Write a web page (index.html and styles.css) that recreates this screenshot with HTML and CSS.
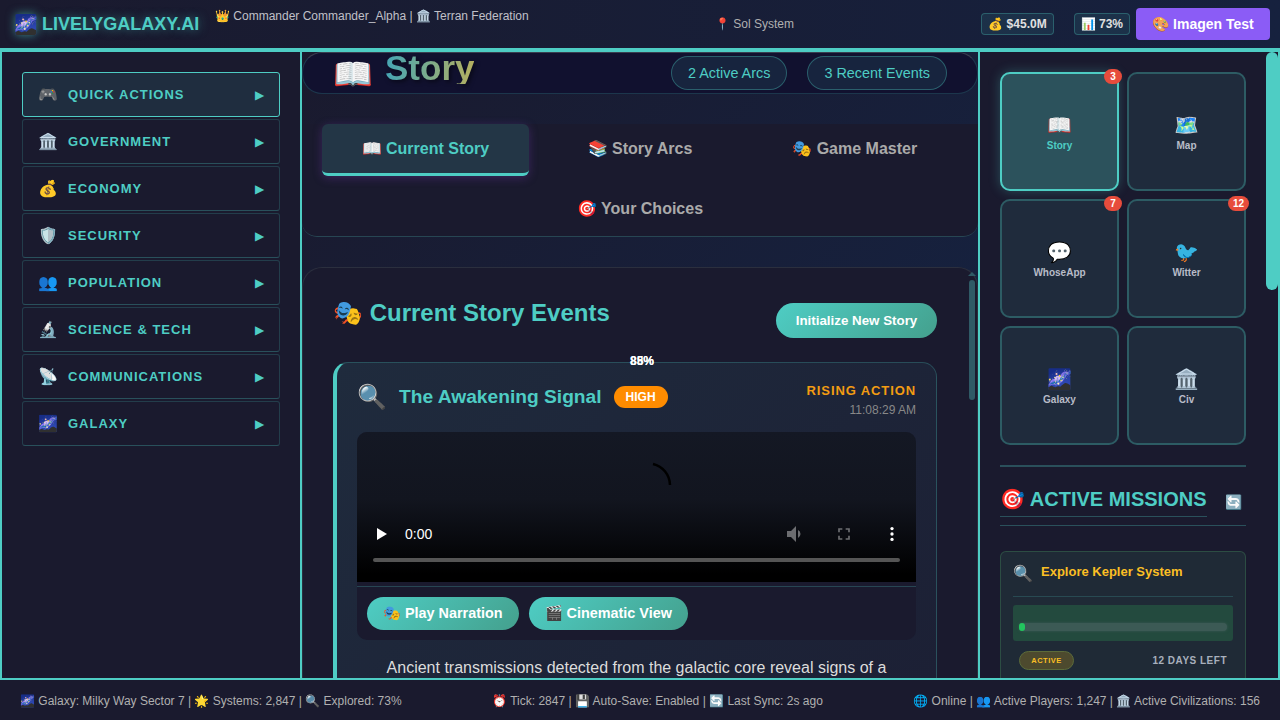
FILE: index.html
```html
<!DOCTYPE html>
<html lang="en">
  <head>
    <meta charset="UTF-8" />
    <meta name="viewport" content="width=device-width, initial-scale=1.0" />
    <title>LivelyGalaxy.ai</title>
    <link rel="stylesheet" href="styles.css">
  </head>
  <body>
    <div class="app">
      <header class="topbar">
        <div class="logo"><span class="logo-icon">🌌</span><span class="logo-text">LIVELYGALAXY.AI</span></div>
        <div class="player">👑 Commander Commander_Alpha | 🏛️ Terran Federation</div>
        <div class="location">📍 Sol System</div>
        <div class="stat stat-money">💰 $45.0M</div>
        <div class="stat stat-approval">📊 73%</div>
        <button class="imagen-btn">🎨 Imagen Test</button>
      </header>

      <main class="layout">
        <nav class="leftnav">
          <div class="navitem active"><span class="navicon">🎮</span><span class="navlabel">QUICK ACTIONS</span><span class="navarrow">▶</span></div>
          <div class="navitem"><span class="navicon">🏛️</span><span class="navlabel">GOVERNMENT</span><span class="navarrow">▶</span></div>
          <div class="navitem"><span class="navicon">💰</span><span class="navlabel">ECONOMY</span><span class="navarrow">▶</span></div>
          <div class="navitem"><span class="navicon">🛡️</span><span class="navlabel">SECURITY</span><span class="navarrow">▶</span></div>
          <div class="navitem"><span class="navicon">👥</span><span class="navlabel">POPULATION</span><span class="navarrow">▶</span></div>
          <div class="navitem"><span class="navicon">🔬</span><span class="navlabel">SCIENCE &amp; TECH</span><span class="navarrow">▶</span></div>
          <div class="navitem"><span class="navicon">📡</span><span class="navlabel">COMMUNICATIONS</span><span class="navarrow">▶</span></div>
          <div class="navitem"><span class="navicon">🌌</span><span class="navlabel">GALAXY</span><span class="navarrow">▶</span></div>
        </nav>

        <section class="center">
          <div class="story-head">
            <span class="story-book">📖</span>
            <h1 class="story-title">Story</h1>
            <div class="pills">
              <span class="pill">2 Active Arcs</span>
              <span class="pill">3 Recent Events</span>
            </div>
          </div>

          <div class="tabs">
            <div class="tab active">📖 Current Story</div>
            <div class="tab">📚 Story Arcs</div>
            <div class="tab">🎭 Game Master</div>
            <div class="tab tab-wide">🎯 Your Choices</div>
          </div>

          <div class="events">
            <div class="events-scroll"><span class="scroll-arrow"></span><span class="scroll-thumb"></span></div>
            <div class="events-head">
              <h2 class="events-title">🎭 Current Story Events</h2>
              <button class="round-btn init-btn">Initialize New Story</button>
            </div>

            <article class="card">
              <span class="stray-pct">88%</span>
              <span class="stray-pct">85%</span>
              <div class="card-head">
                <span class="card-icon">🔍</span>
                <h3 class="card-title">The Awakening Signal</h3>
                <span class="badge-high">HIGH</span>
                <div class="card-meta">
                  <div class="phase">RISING ACTION</div>
                  <div class="time">11:08:29 AM</div>
                </div>
              </div>

              <div class="media">
                <div class="video">
                  <svg class="spinner" width="24" height="26" viewBox="0 0 24 26">
                    <path d="M3 2 A 22 22 0 0 1 20 23" fill="none" stroke="#000" stroke-width="2.5" />
                  </svg>
                  <div class="controls">
                    <svg width="16" height="16" viewBox="0 0 16 16"><path d="M4 2 L14 8 L4 14 Z" fill="#fff" /></svg>
                    <span class="vtime">0:00</span>
                    <span class="vspace"></span>
                    <svg class="vdim vvol" width="24" height="24" viewBox="0 0 24 24"><path d="M3 9v6h4l5 5V4L7 9H3zm13.500 3A4.500 4.500 0 0 0 14 8v8a4.500 4.500 0 0 0 2.500-4z" fill="#fff" /></svg>
                    <svg class="vdim" width="20" height="20" viewBox="0 0 24 24"><path d="M5 10h2V7h3V5H5zm0 4v5h5v-2H7v-3zm12 3h-3v2h5v-5h-2zM14 5v2h3v3h2V5z" fill="#fff" /></svg>
                    <svg width="20" height="20" viewBox="0 0 24 24"><circle cx="12" cy="5.500" r="2" fill="#fff" /><circle cx="12" cy="12" r="2" fill="#fff" /><circle cx="12" cy="18.500" r="2" fill="#fff" /></svg>
                  </div>
                  <div class="vtrack"></div>
                </div>
                <div class="media-actions">
                  <button class="round-btn act-btn">🎭 Play Narration</button>
                  <button class="round-btn act-btn">🎬 Cinematic View</button>
                </div>
              </div>

              <p class="card-text">Ancient transmissions detected from the galactic core reveal signs of a</p>
            </article>
          </div>
        </section>

        <aside class="right">
          <div class="right-thumb"></div>
          <div class="tiles">
            <div class="tile active"><span class="tile-badge">3</span><span class="tile-icon">📖</span><span class="tile-label">Story</span></div>
            <div class="tile"><span class="tile-icon">🗺️</span><span class="tile-label">Map</span></div>
            <div class="tile"><span class="tile-badge">7</span><span class="tile-icon">💬</span><span class="tile-label">WhoseApp</span></div>
            <div class="tile"><span class="tile-badge">12</span><span class="tile-icon">🐦</span><span class="tile-label">Witter</span></div>
            <div class="tile"><span class="tile-icon">🌌</span><span class="tile-label">Galaxy</span></div>
            <div class="tile"><span class="tile-icon">🏛️</span><span class="tile-label">Civ</span></div>
          </div>

          <div class="missions-head">
            <h2 class="missions-title">🎯 ACTIVE MISSIONS</h2>
            <span class="refresh">🔄</span>
          </div>

          <div class="mission">
            <div class="mission-top">
              <span class="mission-icon">🔍</span>
              <span class="mission-name">Explore Kepler System</span>
            </div>
            <div class="mission-progress">
              <div class="mission-bar"><div class="mission-fill" style="width: 3%"></div></div>
            </div>
            <div class="mission-foot">
              <span class="mission-status">ACTIVE</span>
              <span class="mission-days">12 DAYS LEFT</span>
            </div>
          </div>
        </aside>
      </main>

      <footer class="statusbar">
        <span>🌌 Galaxy: Milky Way Sector 7 | 🌟 Systems: 2,847 | 🔍 Explored: 73%</span>
        <span>⏰ Tick: 2847 | 💾 Auto-Save: Enabled | 🔄 Last Sync: 2s ago</span>
        <span>🌐 Online | 👥 Active Players: 1,247 | 🏛️ Active Civilizations: 156</span>
      </footer>
    </div>
  </body>
</html>
```

FILE: styles.css
```css
* {
  box-sizing: border-box;
}
html, body {
  margin: 0;
  height: 100%;
  overflow: hidden;
}
body {
  font-family: "Liberation Sans", Arial, sans-serif;
  background: #1a1a2e;
  color: #e0e0e0;
}
h1, h2, h3, p {
  margin: 0;
}
button {
  font-family: inherit;
  border: none;
}
.app {
  display: grid;
  grid-template-rows: 52px 626px 42px;
  height: 720px;
}

/* top bar */
.topbar {
  display: flex;
  align-items: center;
  padding: 0 10px 0 14px;
  background: linear-gradient(90deg, #1a1a2e, #16213e);
  border-bottom: 4px solid #4ecdc4;
}
.logo {
  display: flex;
  align-items: center;
  width: 201px;
}
.logo-icon {
  flex: none;
  width: 28px;
  font-size: 19px;
  filter: drop-shadow(0 0 5px rgba(78, 205, 196, 0.6));
}
.logo-text {
  font-size: 18px;
  font-weight: bold;
  color: #4ecdc4;
  text-shadow: 0 0 10px rgba(78, 205, 196, 0.5);
  white-space: nowrap;
}
.player {
  width: 500px;
  align-self: flex-start;
  padding-top: 9px;
  font-size: 12px;
  color: #c0c0c8;
  white-space: nowrap;
}
.location {
  font-size: 12px;
  color: #b0b0b0;
}
.stat {
  padding: 3px 6px;
  font-size: 12px;
  font-weight: bold;
  color: #e0e0e0;
  background: rgba(78, 205, 196, 0.1);
  border: 1px solid rgba(78, 205, 196, 0.3);
  border-radius: 4px;
}
.stat-money {
  margin-left: auto;
}
.stat-approval {
  margin-left: 20px;
}
.imagen-btn {
  margin-left: 6px;
  width: 134px;
  height: 32px;
  font-size: 14px;
  font-weight: bold;
  color: #fff;
  background: #8b5cf6;
  border-radius: 4px;
}

/* three columns */
.layout {
  display: grid;
  grid-template-columns: 300px 680px 300px;
  min-height: 0;
}

/* left nav */
.leftnav {
  display: flex;
  flex-direction: column;
  gap: 2px;
  padding: 20px 20px 0;
  background: #1a1a2e;
  border-left: 2px solid #4ecdc4;
}
.navitem {
  display: flex;
  align-items: center;
  height: 45px;
  padding: 0 15px;
  border: 1px solid rgba(78, 205, 196, 0.2);
  border-bottom-color: rgba(78, 205, 196, 0.3);
  border-radius: 3px;
  color: #4ecdc4;
}
.navitem.active {
  background: #1f2d3f;
  border-color: #4ecdc4;
}
.navicon {
  width: 30px;
  font-size: 16px;
}
.navlabel {
  flex: 1;
  font-size: 13px;
  font-weight: bold;
  letter-spacing: 1px;
}
.navarrow {
  font-size: 12px;
}

/* center column */
.center {
  display: flex;
  flex-direction: column;
  min-width: 0;
  background: linear-gradient(135deg, #1a1a2e, #16213e 70%, #17294e);
  border-left: 2px solid #4ecdc4;
  border-right: 2px solid #4ecdc4;
}
.story-head {
  display: flex;
  align-items: center;
  flex: none;
  height: 42px;
  padding: 0 30px;
  background: #11112f;
  border: 1px solid rgba(78, 205, 196, 0.2);
  border-top-color: #3a3f50;
  border-radius: 20px;
}
.story-book {
  font-size: 32px;
  margin-right: 12px;
  margin-top: 2px;
}
.story-title {
  margin-bottom: 10px;
  font-size: 35px;
  line-height: 32px;
  font-weight: bold;
  color: transparent;
  background: linear-gradient(90deg, #45a5b5, #b5b060);
  -webkit-background-clip: text;
  background-clip: text;
  filter: drop-shadow(2px 2px 2px rgba(0, 0, 0, 0.5));
}
.pills {
  display: flex;
  gap: 20px;
  margin-left: auto;
}
.pill {
  padding: 8px 16px;
  font-size: 14.400px;
  line-height: 16px;
  color: #4ecdc4;
  background: rgba(78, 205, 196, 0.1);
  border: 1px solid rgba(78, 205, 196, 0.35);
  border-radius: 17px;
}
.tabs {
  display: grid;
  grid-template-columns: repeat(3, 1fr);
  grid-auto-rows: 52px;
  flex: none;
  gap: 8px;
  margin-top: 30px;
  padding: 0 20px;
  height: 113px;
  background: #1a1a2e;
  border-bottom: 1px solid rgba(78, 205, 196, 0.25);
  border-radius: 0 0 15px 15px;
}
.tab {
  display: flex;
  align-items: center;
  justify-content: center;
  font-size: 16px;
  font-weight: bold;
  color: #aaa;
  border-bottom: 3px solid transparent;
  border-radius: 6px;
}
.tab.active {
  color: #4ecdc4;
  background: #233646;
  border-bottom-color: #4ecdc4;
  box-shadow: 0 2px 10px rgba(120, 60, 180, 0.35);
}
.tab-wide {
  grid-column: 1 / 4;
}

/* events panel, runs down to the status bar */
.events {
  position: relative;
  flex: none;
  height: 411px;
  margin-top: 30px;
  padding: 30px 40px 0 30px;
  background: #1a1a2e;
  border: 1px solid #2b2f3e;
  border-bottom: none;
  border-radius: 20px 20px 0 0;
}
.events-scroll {
  position: absolute;
  top: 0;
  right: 1px;
  bottom: 0;
  width: 8px;
}
.scroll-arrow {
  position: absolute;
  top: 4px;
  left: 0;
  border-left: 4px solid transparent;
  border-right: 4px solid transparent;
  border-bottom: 4px solid #2f5a66;
}
.scroll-thumb {
  position: absolute;
  top: 12px;
  left: 1px;
  width: 6px;
  height: 120px;
  background: #2f5a66;
  border-radius: 3px;
}
.events-head {
  display: flex;
  justify-content: space-between;
  align-items: flex-start;
  height: 64px;
}
.events-title {
  font-size: 24px;
  line-height: 29px;
  font-weight: bold;
  color: #4ecdc4;
}
.round-btn {
  color: #fff;
  font-weight: bold;
  background: linear-gradient(135deg, #4ecdc4, #44a08d);
  border-radius: 18px;
}
.init-btn {
  width: 161px;
  height: 35px;
  margin-top: 5px;
  font-size: 13.330px;
}
.card {
  position: relative;
  height: 316px;
  padding: 20px 20px 0 20px;
  background: linear-gradient(135deg, #1f2b3d, #1c2035);
  border: 1px solid rgba(78, 205, 196, 0.25);
  border-left: 4px solid #4ecdc4;
  border-bottom: none;
  border-radius: 15px 15px 0 0;
}
.stray-pct {
  position: absolute;
  top: -9px;
  left: 293px;
  font-size: 12px;
  font-weight: bold;
  line-height: 14px;
  color: #fff;
}
.card-head {
  display: flex;
  align-items: flex-start;
  height: 49px;
}
.card-icon {
  margin-right: 12px;
  font-size: 24px;
  line-height: 28px;
}
.card-title {
  margin-top: 2px;
  font-size: 19.200px;
  line-height: 23px;
  font-weight: bold;
  color: #4ecdc4;
}
.badge-high {
  margin: 3px 0 0 12px;
  padding: 0 12px;
  height: 22px;
  font-size: 12px;
  font-weight: bold;
  line-height: 22px;
  color: #fff;
  background: #ff8c00;
  border-radius: 11px;
}
.card-meta {
  margin-left: auto;
  text-align: right;
}
.phase {
  font-size: 13px;
  line-height: 16px;
  font-weight: bold;
  letter-spacing: 0.900px;
  color: #f39c12;
}
.time {
  margin-top: 4px;
  font-size: 12px;
  line-height: 14px;
  color: #888;
}
.media {
  border-radius: 10px;
  background: #1a1a2e;
  overflow: hidden;
}
.video {
  position: relative;
  height: 150px;
  background: linear-gradient(180deg, #141824 0%, #12151f 45%, #000 95%);
}
.spinner {
  position: absolute;
  top: 30px;
  left: 293px;
}
.controls {
  position: absolute;
  left: 16px;
  right: 14px;
  top: 92px;
  display: flex;
  align-items: center;
  gap: 9px;
  height: 20px;
}
.vtime {
  margin-left: 7px;
  font-size: 14px;
  color: #fff;
}
.vspace {
  flex: 1;
}
.vdim {
  margin-right: 19px;
  opacity: 0.4;
}
.vvol {
  margin-right: 17px;
}
.vtrack {
  position: absolute;
  left: 16px;
  right: 16px;
  top: 126px;
  height: 4px;
  background: #555;
  border-radius: 2px;
}
.media-actions {
  display: flex;
  gap: 10px;
  height: 54px;
  margin-top: 4px;
  padding: 10px;
  border-top: 1px solid rgba(78, 205, 196, 0.25);
}
.act-btn {
  height: 33px;
  padding: 0 16px;
  font-size: 14.400px;
  white-space: nowrap;
}
.card-text {
  margin-top: 17px;
  padding: 0 20px;
  font-size: 16px;
  line-height: 21px;
  text-align: center;
  color: #dcdcdc;
}

/* right column */
.right {
  position: relative;
  padding: 20px 0 0 20px;
  background: #1a1a2e;
  border-right: 2px solid #4ecdc4;
}
.right-thumb {
  position: absolute;
  top: 0;
  right: 0;
  width: 12px;
  height: 238px;
  background: #4ecdc4;
  border-radius: 6px;
}
.tiles {
  display: grid;
  grid-template-columns: 119px 119px;
  grid-auto-rows: 119px;
  gap: 8px;
  padding-bottom: 20px;
  width: 246px;
  border-bottom: 2px solid rgba(78, 205, 196, 0.3);
}
.tile {
  position: relative;
  display: flex;
  flex-direction: column;
  align-items: center;
  justify-content: center;
  gap: 3px;
  padding-top: 1px;
  background: #1f2b3c;
  border: 2px solid rgba(78, 205, 196, 0.3);
  border-radius: 10px;
}
.tile.active {
  background: #2c525c;
  border-color: #4ecdc4;
  box-shadow: 0 0 12px rgba(78, 205, 196, 0.3);
}
.tile-icon {
  font-size: 20px;
  line-height: 24px;
}
.tile-label {
  font-size: 10px;
  font-weight: bold;
  line-height: 12px;
  color: #b8bcc8;
}
.tile.active .tile-label {
  color: #4ecdc4;
}
.tile-badge {
  position: absolute;
  top: -5px;
  right: -5px;
  min-width: 18px;
  padding: 0 5px;
  height: 15px;
  font-size: 10px;
  font-weight: bold;
  line-height: 15px;
  text-align: center;
  color: #fff;
  background: #e74c3c;
  border-radius: 8px;
}
.missions-head {
  display: flex;
  align-items: flex-start;
  width: 246px;
  height: 59px;
  padding-top: 18px;
  border-bottom: 1px solid rgba(78, 205, 196, 0.3);
}
.missions-title {
  font-size: 20px;
  line-height: 28px;
  padding-bottom: 3px;
  font-weight: bold;
  color: #4ecdc4;
  white-space: nowrap;
  border-bottom: 1px solid rgba(78, 205, 196, 0.3);
}
.refresh {
  margin: 9px 0 0 18px;
  font-size: 14px;
  line-height: 16px;
}
.mission {
  width: 246px;
  height: 127px;
  margin-top: 25px;
  padding: 12px;
  background: #1f2a36;
  border: 1px solid rgba(78, 160, 100, 0.3);
  border-bottom: none;
  border-radius: 6px 6px 0 0;
}
.mission-top {
  display: flex;
  height: 33px;
  gap: 8px;
  border-bottom: 1px solid rgba(78, 205, 196, 0.2);
}
.mission-icon {
  font-size: 16px;
  line-height: 20px;
}
.mission-name {
  font-size: 13px;
  font-weight: bold;
  color: #fbbf24;
}
.mission-progress {
  display: flex;
  align-items: flex-end;
  height: 36px;
  margin-top: 8px;
  padding: 0 6px 10px;
  background: #234a3e;
  border-radius: 3px;
}
.mission-bar {
  width: 100%;
  height: 8px;
  background: #3c5a55;
  border-radius: 4px;
  box-shadow: 0 0 3px #3c5a55;
}
.mission-fill {
  height: 100%;
  background: #22c55e;
  border-radius: 4px;
}
.mission-foot {
  display: flex;
  justify-content: space-between;
  align-items: center;
  margin-top: 10px;
  padding: 0 6px;
}
.mission-status {
  width: 55px;
  height: 19px;
  font-size: 7.500px;
  font-weight: bold;
  line-height: 17px;
  letter-spacing: 0.500px;
  text-align: center;
  color: #fbbf24;
  background: #4d4a2e;
  border: 1px solid #5c6b3a;
  border-radius: 10px;
}
.mission-days {
  font-size: 10px;
  font-weight: bold;
  letter-spacing: 0.500px;
  color: #a8b0bc;
}

/* status bar */
.statusbar {
  display: flex;
  justify-content: space-between;
  align-items: center;
  padding: 2px 20px 0;
  font-size: 12px;
  color: #b0b0b0;
  background: #1a1a2e;
  border-top: 2px solid #4ecdc4;
}
```
